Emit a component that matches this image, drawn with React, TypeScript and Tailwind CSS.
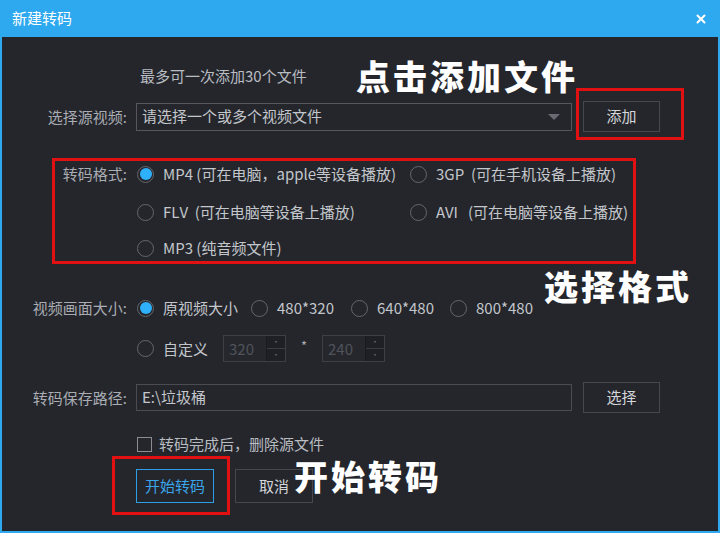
import { X } from 'lucide-react';

const FONT = { fontFamily: '"Noto Sans CJK SC", "Noto Sans", sans-serif' };

function Radio({ checked = false }: { checked?: boolean }) {
  return (
    <span className="flex h-[17px] w-[17px] shrink-0 items-center justify-center rounded-full border-[1.5px] border-[#64676d]">
      {checked && <span className="h-[12px] w-[12px] rounded-full bg-[#2fb0fb]" />}
    </span>
  );
}

function Option({ checked, children, width }: { checked?: boolean; children: React.ReactNode; width?: string }) {
  return (
    <div className={`flex items-center gap-[9px] ${width ?? ''}`}>
      <Radio checked={checked} />
      <span className="whitespace-nowrap text-[15px] leading-5 text-[#c3c6cb]">{children}</span>
    </div>
  );
}

function Spin({ value }: { value: string }) {
  return (
    <div className="flex h-[27px] w-[63px] border border-[#3d3f45] bg-[#25272d]">
      <span className="flex-1 pl-[5px] text-[15px] leading-[25px] text-[#50535a]">{value}</span>
      <div className="flex w-[19px] flex-col border-l border-[#1a1b1f] bg-[#1f2025]">
        <span className="flex flex-1 items-center justify-center border-b border-[#3a3c42] text-[8px] leading-none text-[#6a6d72]">·</span>
        <span className="flex flex-1 items-center justify-center text-[8px] leading-none text-[#6a6d72]">·</span>
      </div>
    </div>
  );
}

function Label({ children }: { children: React.ReactNode }) {
  return <div className="w-[125px] shrink-0 whitespace-nowrap text-right text-[15px] leading-5 text-[#a9acb2]">{children}</div>;
}

export default function App() {
  return (
    <div className="relative h-[533px] w-[720px] overflow-hidden bg-[#2ea9ef]" style={FONT}>
      <div className="flex h-[37px] items-center justify-between pl-[12px] pr-[12px]">
        <span className="text-[15px] text-white">新建转码</span>
        <X className="h-[14px] w-[14px] text-white" strokeWidth={3.5} />
      </div>

      <div className="mx-[2px] h-[494px] bg-[#24262c]">
        <div className="pl-[138px] pt-[29px] text-[15px] leading-5 text-[#b9bcc1]">最多可一次添加30个文件</div>

        <div className="mt-[15px] flex h-[31px] items-center">
          <Label>选择源视频:</Label>
          <div className="ml-[9px] flex h-[28px] w-[436px] items-center justify-between border border-[#55575d] pl-[5px] pr-[11px]">
            <span className="text-[15px] text-[#c3c6cb]">请选择一个或多个视频文件</span>
            <span className="h-0 w-0 border-x-[6px] border-t-[6px] border-x-transparent border-t-[#686b71]" />
          </div>
          <button className="ml-[11px] h-[31px] w-[77px] border border-[#46484e] text-[15px] text-[#d4d6da]">添加</button>
        </div>

        <div className="mt-[32px] flex h-5 items-center">
          <Label>转码格式:</Label>
          <div className="ml-[10px] flex">
            <Option checked width="w-[273px]">MP4 (可在电脑，apple等设备播放)</Option>
            <Option>3GP&nbsp; (可在手机设备上播放)</Option>
          </div>
        </div>
        <div className="mt-[18px] flex h-5 items-center pl-[135px]">
          <Option width="w-[273px]">FLV&nbsp; (可在电脑等设备上播放)</Option>
          <Option>AVI&nbsp;&nbsp; (可在电脑等设备上播放)</Option>
        </div>
        <div className="mt-[16px] flex h-5 items-center pl-[135px]">
          <Option>MP3 (纯音频文件)</Option>
        </div>

        <div className="mt-[40px] flex h-5 items-center">
          <Label>视频画面大小:</Label>
          <div className="ml-[10px] flex">
            <Option checked width="w-[114px]">原视频大小</Option>
            <Option width="w-[100px]">480*320</Option>
            <Option width="w-[99px]">640*480</Option>
            <Option>800*480</Option>
          </div>
        </div>
        <div className="mt-[17px] flex h-[27px] items-center pl-[135px]">
          <Option width="w-[86px]">自定义</Option>
          <Spin value="320" />
          <span className="w-[36px] pb-[6px] text-center text-[13px] text-[#a9acb2]">*</span>
          <Spin value="240" />
        </div>

        <div className="mt-[20px] flex h-[31px] items-center">
          <Label>转码保存路径:</Label>
          <div className="ml-[9px] flex h-[27px] w-[436px] items-center border border-[#4a4c52] pl-[5px]">
            <span className="text-[15px] text-[#c3c6cb]">E:\垃圾桶</span>
          </div>
          <button className="ml-[11px] h-[31px] w-[77px] border border-[#46484e] text-[15px] text-[#d4d6da]">选择</button>
        </div>

        <div className="mt-[23px] flex h-4 items-center gap-[7px] pl-[135px]">
          <span className="h-[15px] w-[15px] border border-[#8a8d93]" />
          <span className="text-[15px] leading-5 text-[#b9bcc1]">转码完成后，删除源文件</span>
        </div>

        <div className="mt-[17px] flex gap-[21px] pl-[134px]">
          <button className="h-[34px] w-[78px] border border-[#2c9fe6] text-[15px] text-[#3aa5ea]">开始转码</button>
          <button className="h-[34px] w-[78px] border border-[#45474d] text-[15px] text-[#d4d6da]">取消</button>
        </div>
      </div>

      <div className="pointer-events-none absolute left-[576px] top-[88px] h-[52px] w-[108px] border-[3px] border-[#e21111]" />
      <div className="pointer-events-none absolute left-[52px] top-[158px] h-[106px] w-[584px] border-[3px] border-[#e21111]" />
      <div className="pointer-events-none absolute left-[112px] top-[456px] h-[59px] w-[118px] border-[3px] border-[#e21111]" />

      <div className="absolute left-[356px] top-[52px] text-[34px] font-black leading-[48px] tracking-[3px] text-white">点击添加文件</div>
      <div className="absolute left-[544px] top-[262px] text-[34px] font-black leading-[48px] tracking-[3px] text-white">选择格式</div>
      <div className="absolute left-[294px] top-[452px] text-[34px] font-black leading-[48px] tracking-[3px] text-white">开始转码</div>
    </div>
  );
}
